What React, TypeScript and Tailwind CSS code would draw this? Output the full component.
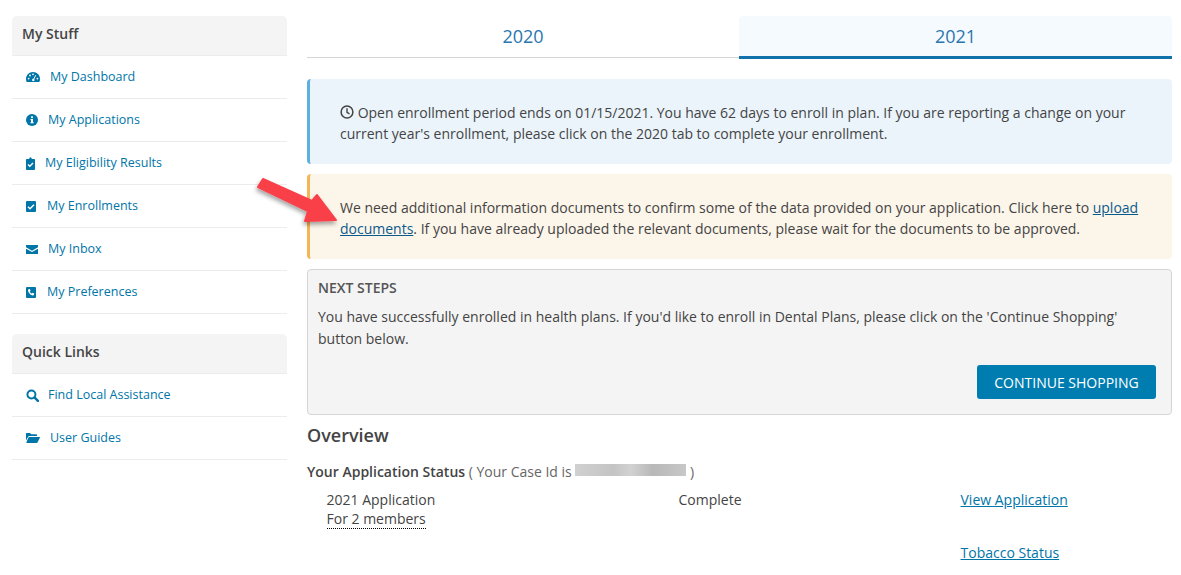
import React from "react";

const C = "#0075a8";

const Dash = () => (
  <svg width="14" height="12" viewBox="0 0 14 12" fill={C}>
    <path d="M7 1C3.1 1 0 4.1 0 8c0 1 .2 1.9.6 2.8.1.2.3.2.5.2h11.8c.2 0 .4 0 .5-.2.4-.9.6-1.8.6-2.8 0-3.900-3.100-7-7-7z" />
    <circle cx="2.600" cy="7.600" r=".9" fill="#fff" />
    <circle cx="4" cy="4.500" r=".9" fill="#fff" />
    <circle cx="7" cy="3.300" r=".9" fill="#fff" />
    <circle cx="11.400" cy="7.600" r=".9" fill="#fff" />
    <path d="M9.800 4.200 7.700 8.200" stroke="#fff" strokeWidth="1" />
    <circle cx="7.300" cy="9" r="1.200" fill="#fff" />
  </svg>
);
const Info = () => (
  <svg width="12" height="12" viewBox="0 0 12 12">
    <circle cx="6" cy="6" r="6" fill={C} />
    <rect x="5" y="2.300" width="2" height="1.800" fill="#fff" />
    <path d="M4.500 5h2.500v3.200h.7v1H4.400v-1H5V6h-.5z" fill="#fff" />
  </svg>
);
const Clip = () => (
  <svg width="9" height="13" viewBox="0 0 9 13">
    <path d="M1 2h2.200C3.300 1 3.800.3 4.500.3S5.700 1 5.800 2H8c.6 0 1 .4 1 1v9c0 .6-.4 1-1 1H1c-.6 0-1-.4-1-1V3c0-.6.4-1 1-1z" fill={C} />
    <path d="M2 7.500 3.800 9.300 7 6" stroke="#fff" strokeWidth="1.400" fill="none" />
  </svg>
);
const Check = () => (
  <svg width="10" height="11" viewBox="0 0 10 11">
    <rect width="10" height="11" rx="1" fill={C} />
    <path d="M2 5.700 4 7.700 8 3.700" stroke="#fff" strokeWidth="1.500" fill="none" />
  </svg>
);
const Mail = () => (
  <svg width="12" height="9" viewBox="0 0 12 9">
    <path d="M0 0h12v2.200L6 5.700 0 2.200z" fill={C} />
    <path d="M0 3.700l6 3.400 6-3.400V9H0z" fill={C} />
  </svg>
);
const Phone = () => (
  <svg width="10" height="11" viewBox="0 0 10 11">
    <rect width="10" height="11" rx="1" fill={C} />
    <path d="M2.600 2.200 3.900 2l.7 1.800-.8.7c.4.900 1 1.600 1.900 2l.8-.8 1.700.8-.2 1.300c-.2.500-.7.700-1.200.6C4.500 8 2.300 5.800 2 3.400c-.1-.5.200-1 .600-1.200z" fill="#fff" />
  </svg>
);
const Search = () => (
  <svg width="13" height="13" viewBox="0 0 12 12" fill="none" stroke={C}>
    <circle cx="5" cy="5" r="3.700" strokeWidth="1.800" />
    <path d="M7.800 7.800 11 11" strokeWidth="2.200" strokeLinecap="round" />
  </svg>
);
const Folder = () => (
  <svg width="14" height="10" viewBox="0 0 14 10" fill={C}>
    <path d="M0 1c0-.6.400-1 1-1h3l1.200 1.200H10c.6 0 1 .4 1 1V3H3.500C2.800 3 2.300 3.300 2 3.900L0 7.500z" />
    <path d="M3.200 4h10.300c.4 0 .6.400.4.700L11.600 9.300c-.2.400-.5.700-1 .7H.8c-.4 0-.6-.4-.4-.7L2.500 4.500c.1-.3.400-.5.700-.5z" />
  </svg>
);
const Clock = () => (
  <svg width="14" height="14" viewBox="0 0 14 14" fill="none" stroke="#444" className="inline-block align-[-1px]">
    <circle cx="7" cy="7" r="5.900" strokeWidth="1.500" />
    <path d="M7 3.300V7.300L9.500 8.800" strokeWidth="1.400" />
  </svg>
);

function NavItem({ icon, label, gap }: { icon: React.ReactNode; label: string; gap: string }) {
  return (
    <div className="flex h-[43px] items-center border-b border-[#ececec] pl-[14px] text-[12.5px] text-[#0075a8]">
      <span className={`flex shrink-0 items-center ${gap}`}>{icon}</span>
      <span>{label}</span>
    </div>
  );
}

function Header({ children }: { children: React.ReactNode }) {
  return (
    <div className="flex h-[40px] items-center rounded-t-[5px] border-b border-[#ececec] bg-[#f4f4f4] pb-[4px] pl-[10px] text-[14px] font-semibold text-[#444]">
      {children}
    </div>
  );
}

export default function App() {
  return (
    <div className="flex h-[575px] w-[1181px] overflow-hidden bg-white text-[14px] text-[#444]" style={{ fontFamily: '"Open Sans", sans-serif' }}>
      <aside className="ml-[12px] mt-[16px] w-[275px] shrink-0">
        <Header>My Stuff</Header>
        <NavItem icon={<Dash />} label="My Dashboard" gap="w-[24px]" />
        <NavItem icon={<Info />} label="My Applications" gap="w-[22px]" />
        <NavItem icon={<Clip />} label="My Eligibility Results" gap="w-[19px]" />
        <NavItem icon={<Check />} label="My Enrollments" gap="w-[21px]" />
        <NavItem icon={<Mail />} label="My Inbox" gap="w-[22px]" />
        <NavItem icon={<Phone />} label="My Preferences" gap="w-[21px]" />
        <div className="h-[20px]" />
        <Header>Quick Links</Header>
        <NavItem icon={<Search />} label="Find Local Assistance" gap="w-[22px]" />
        <NavItem icon={<Folder />} label="User Guides" gap="w-[24px]" />
      </aside>

      <main className="relative ml-[20px] w-[865px] shrink-0">
        <div className="mt-[16px] flex h-[43px]">
          <div className="flex h-[42px] w-[432px] items-center justify-center border-b border-[#d5d5d5] text-[18px] text-[#2a76ae]">2020</div>
          <div className="flex w-[433px] items-center justify-center rounded-t-[4px] border-b-[3px] border-[#0f72ab] bg-[#f5faff] text-[18px] text-[#2a76ae]">2021</div>
        </div>

        <div className="mt-[20px] flex h-[85px] items-center rounded-[4px] border-l-[3px] border-[#5cb0dc] bg-[#ebf4fb] pl-[30px] pr-[20px] pt-[2px] leading-[21px]">
          <p><Clock /> Open enrollment period ends on 01/15/2021. You have 62 days to enroll in plan. If you are reporting a change on your current year's enrollment, please click on the 2020 tab to complete your enrollment.</p>
        </div>

        <div className="mt-[10px] flex h-[85px] items-center rounded-[4px] border-l-[3px] border-[#f5b555] bg-[#fcf5ea] pl-[30px] pr-[20px] pt-[2px] leading-[21px]">
          <p>We need additional information documents to confirm some of the data provided on your application. Click here to <a className="text-[#0b5a8c] underline">upload documents</a>. If you have already uploaded the relevant documents, please wait for the documents to be approved.</p>
        </div>

        <div className="mt-[10px] h-[146px] rounded-[4px] border border-[#d5d5d5] bg-[#f4f4f4] px-[10px] pt-[8px]">
          <div className="font-semibold leading-[19px] text-[#555]">NEXT STEPS</div>
          <p className="mt-[9px] leading-[22px]">You have successfully enrolled in health plans. If you'd like to enroll in Dental Plans, please click on the 'Continue Shopping' button below.</p>
          <div className="mt-[15px] flex justify-end pr-[5px]">
            <button className="h-[34px] w-[179px] rounded-[3px] bg-[#007db0] text-[14px] font-medium text-white">CONTINUE SHOPPING</button>
          </div>
        </div>

        <h2 className="mt-[8px] text-[18px] font-semibold leading-[25px] text-[#444]">Overview</h2>
        <div className="mt-[14px] leading-[20px]">
          <span className="font-semibold">Your Application Status</span>
          <span className="text-[#666]"> ( Your Case Id is </span>
          <span className="inline-block h-[12px] w-[111px] bg-[linear-gradient(90deg,#d0d0d0,#c4c4c4_35%,#d2d2d2_50%,#b8b8b8_70%,#c8c8c8)] align-[1px]" />
          <span className="text-[#666]"> )</span>
        </div>
        <div className="mt-[8px] grid grid-cols-[352px_282px_1fr] pl-[19.5px]">
          <div className="leading-[19px]">
            <div>2021 Application</div>
            <span className="border-b border-dotted border-black">For 2 members</span>
          </div>
          <div className="leading-[19px]">Complete</div>
          <div className="leading-[19px]">
            <a className="text-[#0075a8] underline">View Application</a>
            <div className="mt-[34px]"><a className="text-[#0075a8] underline">Tobacco Status</a></div>
          </div>
        </div>

        <svg className="absolute left-[-52px] top-[178px] overflow-visible" width="82" height="48" viewBox="0 0 82 48">
          <defs>
            <filter id="s" x="-20%" y="-30%" width="140%" height="170%">
              <feDropShadow dx="-1" dy="3" stdDeviation="2" floodColor="#000" floodOpacity="0.35" />
            </filter>
          </defs>
          <path d="M8 1 L57 23 L62 17 L81 42 L50 43 L53 33 L3 9 Z" fill="#f9404a" stroke="#f9404a" strokeWidth="2" strokeLinejoin="round" filter="url(#s)" />
        </svg>
      </main>
    </div>
  );
}
